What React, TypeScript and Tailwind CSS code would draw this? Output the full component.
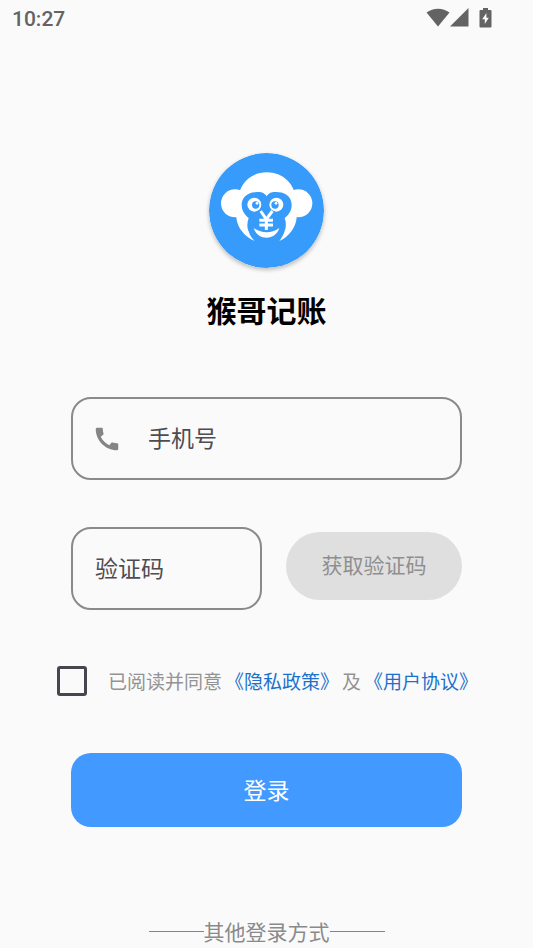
import { useState } from "react";

function StatusBar() {
  return (
    <header className="flex h-[37px] items-center justify-between pl-3 pr-[41px] text-[#636363]">
      <time className="font-[Roboto,sans-serif] text-[21px] leading-6 font-medium">10:27</time>
      <div className="flex items-center pb-0.5">
        <svg className="h-[19px] w-6" viewBox="0 0 24 19" fill="currentColor" aria-hidden="true">
          <path d="M0.5 4.5C7 -0.6 17 -0.6 23.5 4.5L12 18.5Z" />
        </svg>
        <svg className="h-[19px] w-[19px]" viewBox="0 0 19 19" fill="currentColor" aria-hidden="true">
          <path d="M0 18.5L18.5 0V18.5Z" />
        </svg>
        <svg className="ml-[10px] h-5 w-[13px]" viewBox="0 0 13 20" fill="currentColor" aria-hidden="true">
          <path
            fillRule="evenodd"
            d="M4 0H9V2H11.5Q12.5 2 12.5 3V18.5Q12.5 19.5 11.5 19.5H1.5Q.5 19.5 .5 18.5V3Q.5 2 1.5 2H4ZM7.4 5L3.2 11.3H5.8V16L9.8 9.7H7.4Z"
          />
        </svg>
      </div>
    </header>
  );
}

function MonkeyLogo() {
  return (
    <svg
      className="h-[115px] w-[115px] rounded-full shadow-[0_2px_4px_rgba(0,0,0,0.25)]"
      viewBox="0 0 345 345"
      role="img"
      aria-label="猴哥记账"
    >
      <circle cx="172.500" cy="172.500" r="172.500" fill="#369bfa" />
      <g fill="#fff">
        <circle cx="78" cy="151" r="42" />
        <circle cx="268" cy="151" r="42" />
        <path d="M173 58C222 58 260 93 260 143C262 162 264 178 263 194C260 224 240 250 211 264C219 253 223 246 226 236L120 236C122 246 128 255 137 264C107 251 85 224 82 194C82 177 86 162 88 143C88 93 124 58 173 58Z" />
      </g>
      <path
        fill="#369bfa"
        d="M173 130C163 114 149 117 138 118C113 119 98 136 98 156C98 174 109 187 119 195C114 209 113 224 120 237C132 255 151 264 173 264C195 264 214 255 226 237C232 223 232 209 227 195C238 187 248 174 248 156C248 136 234 119 209 118C197 117 183 114 173 130Z"
      />
      <g fill="#fff">
        <circle cx="136" cy="155" r="21" />
        <circle cx="202" cy="155" r="21" />
        <path d="M134 225Q173 251 211 225C205 244 190 254 173 254C155 254 140 244 134 225Z" />
      </g>
      <g fill="#369bfa">
        <circle cx="140" cy="156" r="11" />
        <circle cx="198" cy="156" r="11" />
      </g>
      <circle cx="144" cy="151" r="4" fill="#fff" />
      <circle cx="201" cy="151" r="4" fill="#fff" />
      <path
        d="M155 174L172 199L190 174M151 202H192M151 216H192M172 198V231"
        fill="none"
        stroke="#fff"
        strokeWidth="9"
      />
    </svg>
  );
}

export default function App() {
  const [agreed, setAgreed] = useState(false);

  return (
    <div lang="zh-CN" className="min-h-screen bg-[#fafafa] font-['Noto_Sans_CJK_SC',sans-serif]">
      <StatusBar />
      <main className="flex flex-col items-center px-[71px] pt-[116px]">
        <MonkeyLogo />
        <h1 className="mt-[19px] text-[30px] leading-[44px] font-bold text-black">猴哥记账</h1>

        <form className="mt-[66px] w-full" onSubmit={(event) => event.preventDefault()}>
          <div className="flex h-[83px] items-center rounded-[20px] border-2 border-[#8a8a8a] pl-[19px]">
            <label htmlFor="phone" aria-label="手机号">
              <svg className="h-[30px] w-[30px] text-[#858585]" viewBox="0 0 24 24" fill="currentColor" aria-hidden="true">
                <path d="M20.010 15.380c-1.230 0-2.420-.2-3.530-.56-.35-.12-.74-.03-1.010.24l-1.570 1.970c-2.830-1.350-5.480-3.900-6.890-6.830l1.950-1.660c.27-.28.35-.67.24-1.020-.37-1.110-.56-2.300-.56-3.530 0-.54-.45-.99-.99-.99H4.190C3.650 3 3 3.240 3 3.990 3 13.280 10.730 21 20.010 21c.71 0 .99-.63.99-1.180v-3.450c0-.54-.45-.99-.99-.99z" />
              </svg>
            </label>
            <input
              id="phone"
              type="tel"
              placeholder="手机号"
              className="ml-[26px] h-full min-w-0 flex-1 bg-transparent pb-[3px] text-[23px] leading-8 text-[#4d4c53] outline-none placeholder:text-[#4d4c53]"
            />
          </div>

          <div className="mt-[47px] flex items-center gap-6">
            <input
              type="text"
              inputMode="numeric"
              aria-label="验证码"
              placeholder="验证码"
              className="h-[83px] min-w-0 flex-1 rounded-[20px] border-2 border-[#8a8a8a] bg-transparent px-[22px] pb-[3px] text-[23px] leading-8 text-[#4d4c53] outline-none placeholder:text-[#4d4c53]"
            />
            <button
              type="button"
              disabled
              className="mb-[6px] h-[68px] w-[176px] rounded-full bg-[#dfdfdf] pb-[3px] text-[21px] leading-8 text-[#8f8f8f]"
            >
              获取验证码
            </button>
          </div>

          <div className="-mx-[14px] mt-[56px] flex items-center text-[19px] leading-[30px] whitespace-nowrap text-[#939393]">
            <input
              id="agree"
              type="checkbox"
              checked={agreed}
              onChange={(event) => setAgreed(event.target.checked)}
              className="h-[30px] w-[30px] shrink-0 appearance-none rounded-[3px] border-3 border-[#47464f] checked:bg-[#4299ff]"
            />
            <div className="ml-[21px] flex gap-[3px]">
              <label htmlFor="agree">已阅读并同意</label>
              <a href="#privacy" className="text-[#1a72cc]">《隐私政策》</a>
              <span>及</span>
              <a href="#terms" className="text-[#1a72cc]">《用户协议》</a>
            </div>
          </div>

          <button type="submit" className="mt-[57px] h-[74px] w-full rounded-[20px] bg-[#4299ff] pb-[3px] text-[23px] leading-8 text-white">
            登录
          </button>
        </form>

        <div className="mt-[88px] flex h-8 items-center text-[21px] leading-8 whitespace-nowrap text-[#8a8a8a]">
          <span className="h-px w-[55px] bg-[#858585]" />
          <h2>其他登录方式</h2>
          <span className="h-px w-[55px] bg-[#858585]" />
        </div>
      </main>
    </div>
  );
}
